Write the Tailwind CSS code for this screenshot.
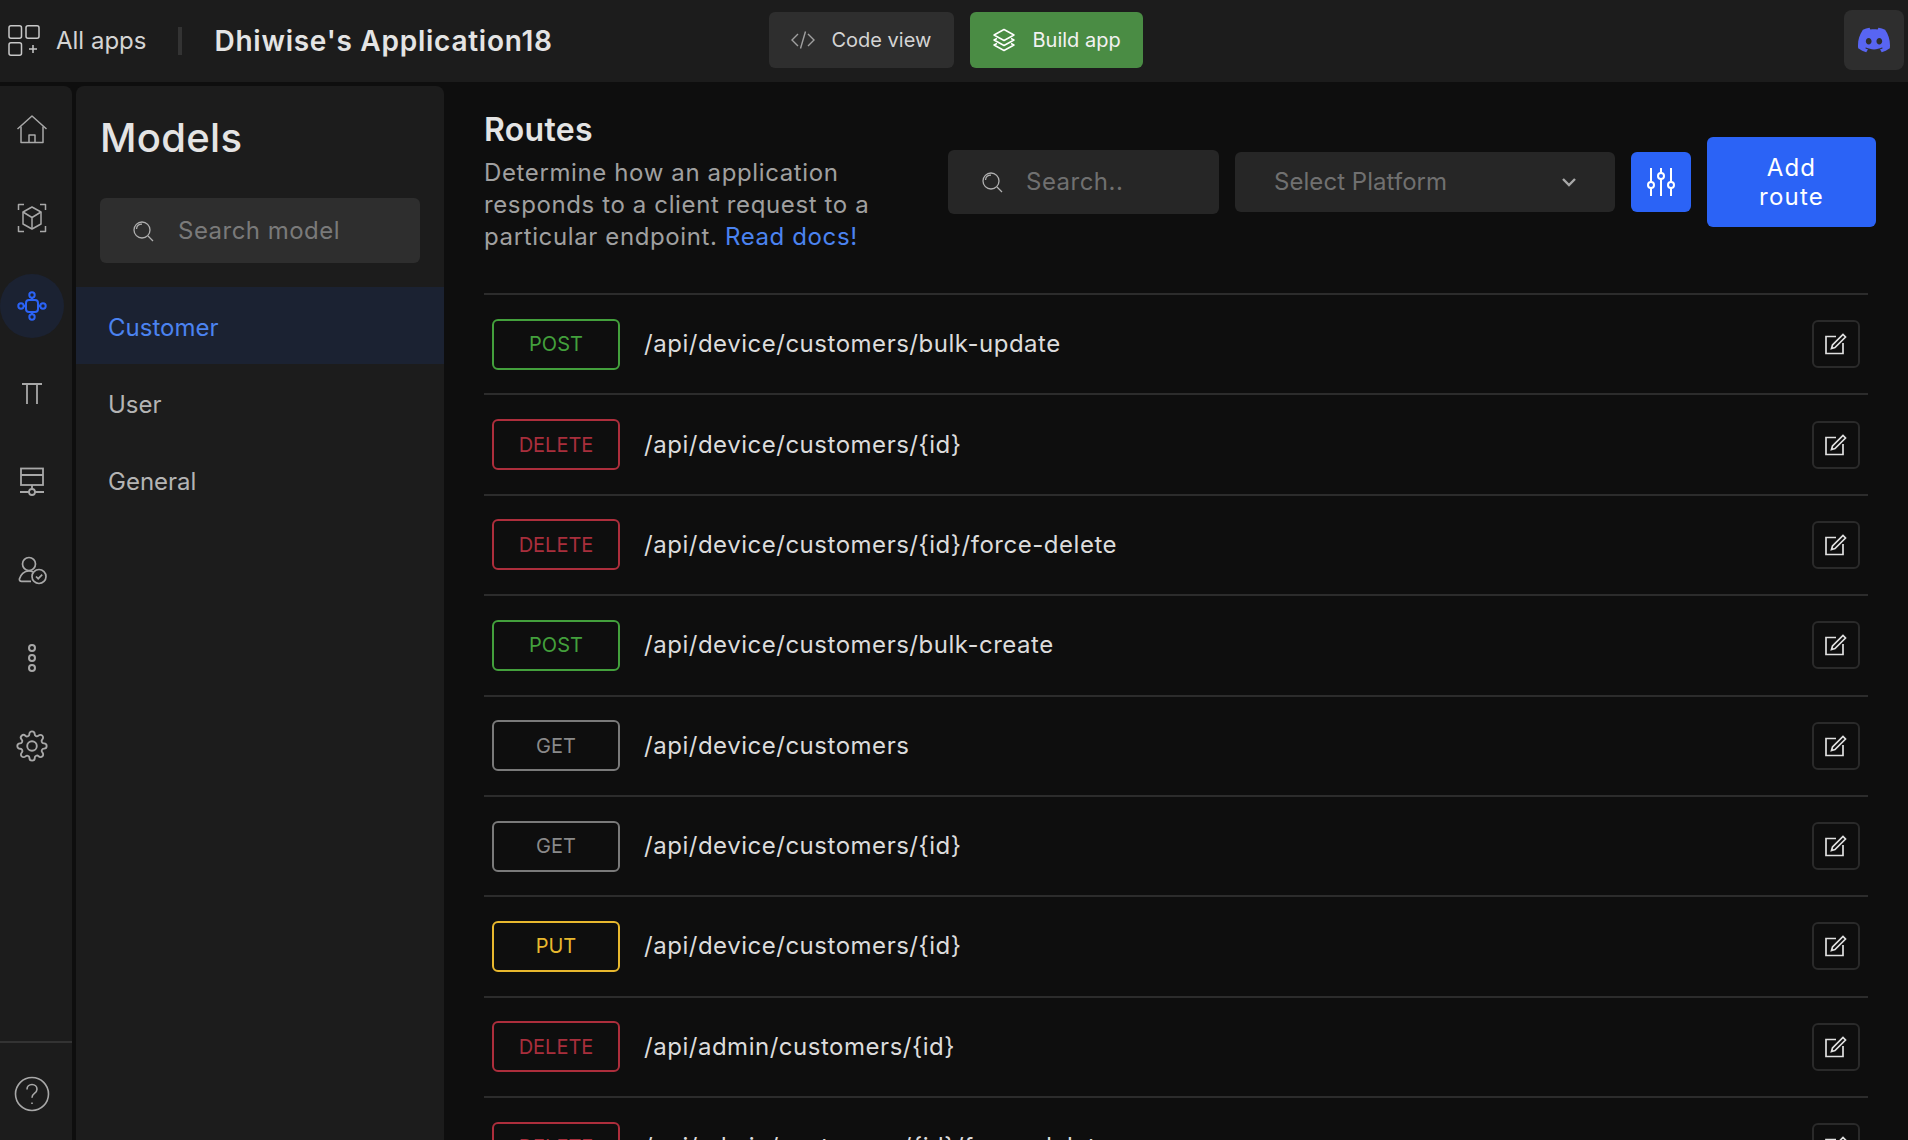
<!DOCTYPE html>
<html lang="en">
<head>
    <meta charset="UTF-8">
    <title>Routes</title>
    <script src="https://cdn.jsdelivr.net/npm/@tailwindcss/browser@4"></script>
</head>
<body class="bg-[#0e0e0e] overflow-hidden font-[family-name:Inter,sans-serif]">
<div class="h-screen flex flex-col overflow-hidden">
    <!-- top bar -->
    <header class="h-[82px] shrink-0 bg-[#1c1c1c] flex items-center pl-[8px]">
        <svg class="w-[32px] h-[32px] text-[#c8c8c8]" viewBox="0 0 32 32" fill="none" stroke="currentColor" stroke-width="1.5">
            <rect x="1" y="0.750" width="12.500" height="12.500" rx="2"/><rect x="18" y="0.750" width="13" height="12.500" rx="2"/><rect x="1" y="17.750" width="12.500" height="12.500" rx="2"/><path d="M21 24h8M25 20v8"/>
        </svg>
        <span class="ml-[16px] text-[24px] text-[#d4d4d4]">All apps</span>
        <div class="ml-[32px] w-[4px] h-[28px] bg-[#333333]"></div>
        <h1 class="ml-[32px] w-[555px] text-[28px] tracking-[0.75px] font-semibold text-[#e4e4e4]">Dhiwise's Application18</h1>
        <button class="w-[185px] h-[56px] mt-[-2px] rounded-md bg-[#2e2e2e] flex items-center pl-[21px] text-[20px] text-[#d4d4d4]">
            <svg class="w-[26px] h-[20px] mr-[15px] text-[#a0a0a0]" viewBox="0 0 26 20" fill="none" stroke="currentColor" stroke-width="1.4"><path d="M8 4l-6 6 6 6M18 4l6 6-6 6M15.500 1.500l-5 17"/></svg>
            Code view
        </button>
        <button class="ml-[16px] w-[173px] h-[56px] mt-[-2px] rounded-md bg-[#4a8c44] flex items-center pl-[22px] text-[20px] text-[#f2f2f2]">
            <svg class="w-[24px] h-[24px] mr-[16px] text-white" viewBox="0 0 24 24" fill="none" stroke="currentColor" stroke-width="1.5" stroke-linejoin="round"><path d="M12 1.500L22 7l-10 5.500L2 7z"/><path d="M5 10.500L2 12l10 5.500L22 12l-3-1.500"/><path d="M5 15.500L2 17l10 5.500L22 17l-3-1.500"/></svg>
            Build app
        </button>
        <button class="ml-auto mr-[4px] w-[60px] h-[60px] mt-[-2px] rounded-lg bg-[#2e2e2e] flex items-center justify-center">
            <svg class="w-[32px] h-[32px] text-[#5865f2]" viewBox="0 0 24 24" fill="currentColor"><path d="M20.317 4.3698a19.7913 19.7913 0 00-4.8851-1.5152.0741.0741 0 00-.0785.0371c-.211.3753-.4447.8648-.6083 1.2495-1.8447-.2762-3.68-.2762-5.4868 0-.1636-.3933-.4058-.8742-.6177-1.2495a.077.077 0 00-.0785-.037 19.7363 19.7363 0 00-4.8852 1.515.0699.0699 0 00-.0321.0277C.5334 9.0458-.319 13.5799.0992 18.0578a.0824.0824 0 00.0312.0561c2.0528 1.5076 4.0413 2.4228 5.9929 3.0294a.0777.0777 0 00.0842-.0276c.4616-.6304.8731-1.2952 1.226-1.9942a.076.076 0 00-.0416-.1057c-.6528-.2476-1.2743-.5495-1.8722-.8923a.077.077 0 01-.0076-.1277c.1258-.0943.2517-.1923.3718-.2914a.0743.0743 0 01.0776-.0105c3.9278 1.7933 8.18 1.7933 12.0614 0a.0739.0739 0 01.0785.0095c.1202.099.246.1981.3728.2924a.077.077 0 01-.0066.1276 12.2986 12.2986 0 01-1.873.8914.0766.0766 0 00-.0407.1067c.3604.698.7719 1.3628 1.225 1.9932a.076.076 0 00.0842.0286c1.961-.6067 3.9495-1.5219 6.0023-3.0294a.077.077 0 00.0313-.0552c.5004-5.177-.8382-9.6739-3.5485-13.6604a.061.061 0 00-.0312-.0286zM8.02 15.3312c-1.1825 0-2.1569-1.0857-2.1569-2.419 0-1.3332.9555-2.4189 2.157-2.4189 1.2108 0 2.1757 1.0952 2.1568 2.419 0 1.3332-.9555 2.4189-2.1569 2.4189zm7.9748 0c-1.1825 0-2.1569-1.0857-2.1569-2.419 0-1.3332.9554-2.4189 2.1569-2.4189 1.2108 0 2.1757 1.0952 2.1568 2.419 0 1.3332-.946 2.4189-2.1568 2.4189Z"/></svg>
        </button>
    </header>

    <div class="flex flex-1 min-h-0">
        <!-- icon sidebar -->
        <aside class="w-[72px] shrink-0 mt-[4px] bg-[#1c1c1c] rounded-tr-lg flex flex-col items-start">
            <div class="flex flex-col">
                <div class="w-[64px] h-[88px] flex items-center justify-center">
                    <svg class="w-[32px] h-[32px] text-[#a8a8a8]" viewBox="0 0 32 32" fill="none" stroke="currentColor" stroke-width="1.5" stroke-linejoin="round"><path d="M1.500 15L16 2l14.500 13"/><path d="M5 12.500V28.500h22V12.500"/><path d="M13 28.500V21h6v7.500"/></svg>
                </div>
                <div class="w-[64px] h-[88px] flex items-center justify-center">
                    <svg class="w-[32px] h-[32px] text-[#a8a8a8]" viewBox="0 0 32 32" fill="none" stroke="currentColor" stroke-width="1.5" stroke-linejoin="round"><path d="M8 2.500H2.500V8M24 2.500h5.500V8M2.500 24v5.500H8M29.500 24v5.500H24"/><path d="M16 5l9 5v12l-9 5-9-5V10z"/><path d="M7 10l9 5.500 9-5.500M16 15.500V27"/></svg>
                </div>
                <div class="w-[64px] h-[88px] flex items-center justify-center">
                    <div class="w-[64px] h-[64px] rounded-full bg-[#1b2232] flex items-center justify-center">
                        <svg class="w-[32px] h-[32px] text-[#2b63f6]" viewBox="0 0 32 32" fill="none" stroke="currentColor" stroke-width="2"><rect x="10" y="10" width="12" height="12" rx="3"/><circle cx="16" cy="5" r="2.700"/><circle cx="16" cy="27" r="2.700"/><circle cx="5" cy="16" r="2.700"/><circle cx="27" cy="16" r="2.700"/><path d="M16 7.700V10M16 22v2.300M7.700 16H10M22 16h2.300"/></svg>
                    </div>
                </div>
                <div class="w-[64px] h-[88px] flex items-center justify-center">
                    <svg class="w-[32px] h-[32px] text-[#a8a8a8]" viewBox="0 0 32 32" fill="none" stroke="currentColor" stroke-width="1.8"><path d="M6 6h20M11 6v20M21 6v20"/></svg>
                </div>
                <div class="w-[64px] h-[88px] flex items-center justify-center">
                    <svg class="w-[32px] h-[32px] text-[#a8a8a8]" viewBox="0 0 32 32" fill="none" stroke="currentColor" stroke-width="1.8"><rect x="5" y="2.500" width="22" height="16.500"/><path d="M5 9h22M16 19v4M4 26h9M19 26h9"/><circle cx="16" cy="26" r="3"/></svg>
                </div>
                <div class="w-[64px] h-[88px] flex items-center justify-center">
                    <svg class="w-[32px] h-[32px] text-[#a8a8a8]" viewBox="0 0 32 32" fill="none" stroke="currentColor" stroke-width="1.7"><circle cx="13" cy="10" r="6.500"/><path d="M17 18c-1-.7-2.500-1.200-4-1.200-5 0-8.500 4-9.500 8-.4 1.500.5 2.500 2 2.500H15"/><circle cx="23" cy="22.500" r="7"/><path d="M20 22.500l2.200 2.200 4-4"/></svg>
                </div>
                <div class="w-[64px] h-[88px] flex items-center justify-center">
                    <svg class="w-[32px] h-[32px] text-[#a8a8a8]" viewBox="0 0 32 32" fill="none" stroke="currentColor" stroke-width="2"><circle cx="16" cy="6" r="3"/><circle cx="16" cy="16" r="3"/><circle cx="16" cy="26" r="3"/></svg>
                </div>
                <div class="w-[64px] h-[88px] flex items-center justify-center">
                    <svg class="w-[32px] h-[32px] text-[#a8a8a8]" viewBox="0 0 24 24" fill="none" stroke="currentColor" stroke-width="1.4"><circle cx="12" cy="12" r="3.600"/><path d="M19.400 15a1.650 1.650 0 00.33 1.820l.06.06a2 2 0 11-2.830 2.830l-.06-.06a1.650 1.650 0 00-1.820-.33 1.650 1.650 0 00-1 1.510V21a2 2 0 01-4 0v-.09A1.650 1.650 0 009 19.400a1.650 1.650 0 00-1.820.33l-.06.06a2 2 0 11-2.830-2.830l.06-.06a1.650 1.650 0 00.33-1.820 1.650 1.650 0 00-1.510-1H3a2 2 0 010-4h.09A1.650 1.650 0 004.600 9a1.650 1.650 0 00-.33-1.820l-.06-.06a2 2 0 112.830-2.830l.06.06a1.650 1.650 0 001.820.33H9a1.650 1.650 0 001-1.510V3a2 2 0 014 0v.09a1.650 1.650 0 001 1.510 1.650 1.650 0 001.820-.33l.06-.06a2 2 0 112.830 2.830l-.06.06a1.650 1.650 0 00-.33 1.820V9a1.650 1.650 0 001.510 1H21a2 2 0 010 4h-.09a1.650 1.650 0 00-1.510 1z"/></svg>
                </div>
            </div>
            <div class="mt-auto w-full border-t-2 border-[#333333] h-[99px] flex items-center pt-[5px]">
                <div class="w-[64px] flex justify-center">
                    <svg class="w-[36px] h-[36px] text-[#a8a8a8]" viewBox="0 0 36 36" fill="none" stroke="currentColor" stroke-width="1.6"><circle cx="18" cy="18" r="16.500"/><path d="M13 13.500c0-3 2.200-5 5-5s5 2 5 4.800c0 2-1 3.200-2.800 4.400-1.500 1-2.200 1.800-2.200 4"/><path d="M18 26.500v1.500"/></svg>
                </div>
            </div>
        </aside>

        <!-- models panel -->
        <section class="w-[368px] shrink-0 ml-[4px] mt-[4px] bg-[#1c1c1c] rounded-t-lg">
            <h2 class="mt-[24px] ml-[24px] h-[56px] leading-[56px] text-[40px] font-[450] tracking-[0.3px] text-[#e4e4e4]">Models</h2>
            <div class="mt-[32px] mx-[24px] h-[65px] rounded-md bg-[#2e2e2e] flex items-center pl-[32px]">
                <svg class="w-[22px] h-[22px] text-[#b0b0b0]" viewBox="0 0 22 22" fill="none" stroke="currentColor" stroke-width="1.3"><circle cx="10" cy="10" r="8"/><path d="M4.500 9c.3-2.800 2.500-4.800 5.500-4.800M16 16l5 5"/></svg>
                <span class="ml-[24px] text-[24px] tracking-[0.02em] text-[#7a7a7a]">Search model</span>
            </div>
            <div class="mt-[24px]">
                <div class="h-[77px] pl-[32px] pt-[5px] flex items-center bg-[#1b2232] text-[24px] text-[#4b83f0]">Customer</div>
                <div class="h-[77px] pl-[32px] pt-[5px] flex items-center text-[24px] text-[#b4b4b4]">User</div>
                <div class="h-[77px] pl-[32px] pt-[5px] flex items-center text-[24px] text-[#b4b4b4]">General</div>
            </div>
        </section>

        <!-- routes -->
        <main class="flex-1 min-w-0 pl-[40px] pr-[40px] overflow-hidden">
            <div class="h-[211px] pt-[24px] flex items-start">
                <div class="w-[464px] shrink-0">
                    <h2 class="h-[48px] leading-[48px] text-[32px] tracking-[0.3px] font-semibold text-[#e4e4e4]">Routes</h2>
                    <p class="mt-[3px] w-[420px] text-[24px] leading-[32px] tracking-[0.62px] text-[#a0a0a0]">Determine how an application responds to a client request to a particular endpoint. <span class="text-[#4b83f0]">Read docs!</span></p>
                </div>
                <div class="mt-[31px] h-[90px] flex items-center gap-[16px] mr-[-8px]">
                    <div class="w-[271px] h-[64px] rounded-md bg-[#262626] flex items-center pl-[33px]">
                        <svg class="w-[22px] h-[22px] text-[#b0b0b0]" viewBox="0 0 22 22" fill="none" stroke="currentColor" stroke-width="1.3"><circle cx="10" cy="10" r="8"/><path d="M4.500 9c.3-2.800 2.500-4.800 5.500-4.800M16 16l5 5"/></svg>
                        <span class="ml-[23px] text-[24px] tracking-[0.02em] text-[#707070]">Search..</span>
                    </div>
                    <div class="w-[380px] h-[60px] rounded-md bg-[#262626] flex items-center pl-[39px]">
                        <span class="text-[24px] tracking-[0.05px] text-[#707070]">Select Platform</span>
                        <svg class="ml-auto mr-[38px] w-[16px] h-[16px] text-[#a8a8a8]" viewBox="0 0 16 16" fill="none" stroke="currentColor" stroke-width="2.400"><path d="M2 5l6 6 6-6"/></svg>
                    </div>
                    <button class="w-[60px] h-[60px] rounded-md bg-[#2b63f6] flex items-center justify-center">
                        <svg class="w-[30px] h-[30px] text-white" viewBox="0 0 30 30" fill="none" stroke="currentColor" stroke-width="2"><path d="M5 1v14M5 21v8M15 1v5M15 12v17M25 1v14M25 21v8"/><circle cx="5" cy="18" r="3"/><circle cx="15" cy="9" r="3"/><circle cx="25" cy="18" r="3"/></svg>
                    </button>
                    <button class="w-[169px] h-[90px] rounded-md bg-[#2b63f6] text-[24px] leading-[29px] tracking-[0.05em] text-white">Add<br>route</button>
                </div>
            </div>

            <div class="h-[100.375px] border-t-2 border-[#2c2c2c] flex items-center px-[8px]">
                <span class="w-[128px] h-[51px] mr-[24px] rounded-md border-2 border-[#43a03c] flex items-center justify-center text-[20px] text-[#43a03c]">POST</span>
                <span class="text-[24px] tracking-[0.52px] text-[#dcdcdc]">/api/device/customers/bulk-update</span>
                <button class="ml-auto w-[48px] h-[48px] rounded-md border-2 border-[#2a2a2a] flex items-center justify-center">
                    <svg class="w-[22px] h-[22px] text-[#e0e0e0]" viewBox="0 0 22 22" fill="none" stroke="currentColor" stroke-width="1.700"><path d="M11 3.500H1v17h17V10"/><path d="M6.500 15.500l1-3.500L18 1.500l2.500 2.500L10 14.500z"/></svg>
                </button>
            </div>
            <div class="h-[100.375px] border-t-2 border-[#2c2c2c] flex items-center px-[8px]">
                <span class="w-[128px] h-[51px] mr-[24px] rounded-md border-2 border-[#ad2e3c] flex items-center justify-center text-[20px] text-[#a82e3c]">DELETE</span>
                <span class="text-[24px] tracking-[0.52px] text-[#dcdcdc]">/api/device/customers/{id}</span>
                <button class="ml-auto w-[48px] h-[48px] rounded-md border-2 border-[#2a2a2a] flex items-center justify-center">
                    <svg class="w-[22px] h-[22px] text-[#e0e0e0]" viewBox="0 0 22 22" fill="none" stroke="currentColor" stroke-width="1.700"><path d="M11 3.500H1v17h17V10"/><path d="M6.500 15.500l1-3.500L18 1.500l2.500 2.500L10 14.500z"/></svg>
                </button>
            </div>
            <div class="h-[100.375px] border-t-2 border-[#2c2c2c] flex items-center px-[8px]">
                <span class="w-[128px] h-[51px] mr-[24px] rounded-md border-2 border-[#ad2e3c] flex items-center justify-center text-[20px] text-[#a82e3c]">DELETE</span>
                <span class="text-[24px] tracking-[0.52px] text-[#dcdcdc]">/api/device/customers/{id}/force-delete</span>
                <button class="ml-auto w-[48px] h-[48px] rounded-md border-2 border-[#2a2a2a] flex items-center justify-center">
                    <svg class="w-[22px] h-[22px] text-[#e0e0e0]" viewBox="0 0 22 22" fill="none" stroke="currentColor" stroke-width="1.700"><path d="M11 3.500H1v17h17V10"/><path d="M6.500 15.500l1-3.500L18 1.500l2.500 2.500L10 14.500z"/></svg>
                </button>
            </div>
            <div class="h-[100.375px] border-t-2 border-[#2c2c2c] flex items-center px-[8px]">
                <span class="w-[128px] h-[51px] mr-[24px] rounded-md border-2 border-[#43a03c] flex items-center justify-center text-[20px] text-[#43a03c]">POST</span>
                <span class="text-[24px] tracking-[0.52px] text-[#dcdcdc]">/api/device/customers/bulk-create</span>
                <button class="ml-auto w-[48px] h-[48px] rounded-md border-2 border-[#2a2a2a] flex items-center justify-center">
                    <svg class="w-[22px] h-[22px] text-[#e0e0e0]" viewBox="0 0 22 22" fill="none" stroke="currentColor" stroke-width="1.700"><path d="M11 3.500H1v17h17V10"/><path d="M6.500 15.500l1-3.500L18 1.500l2.500 2.500L10 14.500z"/></svg>
                </button>
            </div>
            <div class="h-[100.375px] border-t-2 border-[#2c2c2c] flex items-center px-[8px]">
                <span class="w-[128px] h-[51px] mr-[24px] rounded-md border-2 border-[#7a7a7a] flex items-center justify-center text-[20px] text-[#8a8a8a]">GET</span>
                <span class="text-[24px] tracking-[0.52px] text-[#dcdcdc]">/api/device/customers</span>
                <button class="ml-auto w-[48px] h-[48px] rounded-md border-2 border-[#2a2a2a] flex items-center justify-center">
                    <svg class="w-[22px] h-[22px] text-[#e0e0e0]" viewBox="0 0 22 22" fill="none" stroke="currentColor" stroke-width="1.700"><path d="M11 3.500H1v17h17V10"/><path d="M6.500 15.500l1-3.500L18 1.500l2.500 2.500L10 14.500z"/></svg>
                </button>
            </div>
            <div class="h-[100.375px] border-t-2 border-[#2c2c2c] flex items-center px-[8px]">
                <span class="w-[128px] h-[51px] mr-[24px] rounded-md border-2 border-[#7a7a7a] flex items-center justify-center text-[20px] text-[#8a8a8a]">GET</span>
                <span class="text-[24px] tracking-[0.52px] text-[#dcdcdc]">/api/device/customers/{id}</span>
                <button class="ml-auto w-[48px] h-[48px] rounded-md border-2 border-[#2a2a2a] flex items-center justify-center">
                    <svg class="w-[22px] h-[22px] text-[#e0e0e0]" viewBox="0 0 22 22" fill="none" stroke="currentColor" stroke-width="1.700"><path d="M11 3.500H1v17h17V10"/><path d="M6.500 15.500l1-3.500L18 1.500l2.500 2.500L10 14.500z"/></svg>
                </button>
            </div>
            <div class="h-[100.375px] border-t-2 border-[#2c2c2c] flex items-center px-[8px]">
                <span class="w-[128px] h-[51px] mr-[24px] rounded-md border-2 border-[#e8b82e] flex items-center justify-center text-[20px] text-[#e8b82e]">PUT</span>
                <span class="text-[24px] tracking-[0.52px] text-[#dcdcdc]">/api/device/customers/{id}</span>
                <button class="ml-auto w-[48px] h-[48px] rounded-md border-2 border-[#2a2a2a] flex items-center justify-center">
                    <svg class="w-[22px] h-[22px] text-[#e0e0e0]" viewBox="0 0 22 22" fill="none" stroke="currentColor" stroke-width="1.700"><path d="M11 3.500H1v17h17V10"/><path d="M6.500 15.500l1-3.500L18 1.500l2.500 2.500L10 14.500z"/></svg>
                </button>
            </div>
            <div class="h-[100.375px] border-t-2 border-[#2c2c2c] flex items-center px-[8px]">
                <span class="w-[128px] h-[51px] mr-[24px] rounded-md border-2 border-[#ad2e3c] flex items-center justify-center text-[20px] text-[#a82e3c]">DELETE</span>
                <span class="text-[24px] tracking-[0.52px] text-[#dcdcdc]">/api/admin/customers/{id}</span>
                <button class="ml-auto w-[48px] h-[48px] rounded-md border-2 border-[#2a2a2a] flex items-center justify-center">
                    <svg class="w-[22px] h-[22px] text-[#e0e0e0]" viewBox="0 0 22 22" fill="none" stroke="currentColor" stroke-width="1.700"><path d="M11 3.500H1v17h17V10"/><path d="M6.500 15.500l1-3.500L18 1.500l2.500 2.500L10 14.500z"/></svg>
                </button>
            </div>
            <div class="h-[100.375px] border-t-2 border-[#2c2c2c] flex items-center px-[8px]">
                <span class="w-[128px] h-[51px] mr-[24px] rounded-md border-2 border-[#ad2e3c] flex items-center justify-center text-[20px] text-[#a82e3c]">DELETE</span>
                <span class="text-[24px] tracking-[0.52px] text-[#dcdcdc]">/api/admin/customers/{id}/force-delete</span>
                <button class="ml-auto w-[48px] h-[48px] rounded-md border-2 border-[#2a2a2a] flex items-center justify-center">
                    <svg class="w-[22px] h-[22px] text-[#e0e0e0]" viewBox="0 0 22 22" fill="none" stroke="currentColor" stroke-width="1.700"><path d="M11 3.500H1v17h17V10"/><path d="M6.500 15.500l1-3.500L18 1.500l2.500 2.500L10 14.500z"/></svg>
                </button>
            </div>
        </main>
    </div>
</div>
</body>
</html>
